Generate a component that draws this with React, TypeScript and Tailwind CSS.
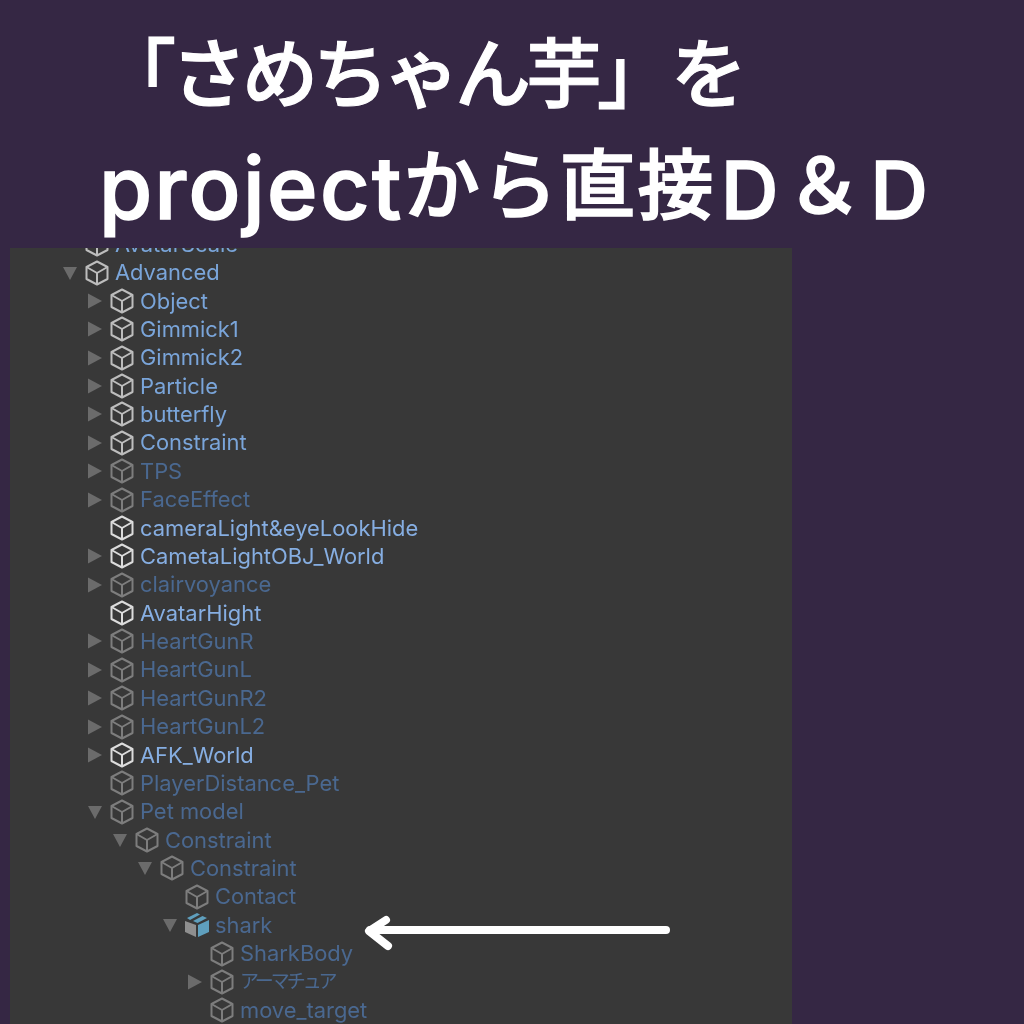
import React from "react";

type Tone = "blue" | "white" | "dim";
type Row = { n: string; d: number; a?: "r" | "d"; t: Tone; prefab?: boolean; cjk?: boolean };

const rows: Row[] = [
  { n: "AvatarScale", d: 0, t: "blue" },
  { n: "Advanced", d: 0, a: "d", t: "blue" },
  { n: "Object", d: 1, a: "r", t: "blue" },
  { n: "Gimmick1", d: 1, a: "r", t: "blue" },
  { n: "Gimmick2", d: 1, a: "r", t: "blue" },
  { n: "Particle", d: 1, a: "r", t: "blue" },
  { n: "butterfly", d: 1, a: "r", t: "blue" },
  { n: "Constraint", d: 1, a: "r", t: "blue" },
  { n: "TPS", d: 1, a: "r", t: "dim" },
  { n: "FaceEffect", d: 1, a: "r", t: "dim" },
  { n: "cameraLight&eyeLookHide", d: 1, t: "white" },
  { n: "CametaLightOBJ_World", d: 1, a: "r", t: "white" },
  { n: "clairvoyance", d: 1, a: "r", t: "dim" },
  { n: "AvatarHight", d: 1, t: "white" },
  { n: "HeartGunR", d: 1, a: "r", t: "dim" },
  { n: "HeartGunL", d: 1, a: "r", t: "dim" },
  { n: "HeartGunR2", d: 1, a: "r", t: "dim" },
  { n: "HeartGunL2", d: 1, a: "r", t: "dim" },
  { n: "AFK_World", d: 1, a: "r", t: "white" },
  { n: "PlayerDistance_Pet", d: 1, t: "dim" },
  { n: "Pet model", d: 1, a: "d", t: "dim" },
  { n: "Constraint", d: 2, a: "d", t: "dim" },
  { n: "Constraint", d: 3, a: "d", t: "dim" },
  { n: "Contact", d: 4, t: "dim" },
  { n: "shark", d: 4, a: "d", t: "dim", prefab: true },
  { n: "SharkBody", d: 5, t: "dim" },
  { n: "アーマチュア", d: 5, a: "r", t: "dim", cjk: true },
  { n: "move_target", d: 5, t: "dim" },
];

function Cube({ tone }: { tone: Tone }) {
  const c = tone === "white" ? "#dcdcdc" : tone === "dim" ? "#7d7d7d" : "#bdbdbd";
  return (
    <svg width="26" height="26" viewBox="0 0 26 26" fill="none" stroke={c} strokeWidth="2" strokeLinejoin="round">
      <path d="M13 1.5 L23.5 7 V19 L13 24.5 L2.5 19 V7 Z" />
      <path d="M2.5 7 L13 13 L23.5 7 M13 13 V24.5" />
    </svg>
  );
}

function Prefab() {
  return (
    <svg width="26" height="26" viewBox="0 0 26 26">
      <path d="M1 9 L12 13 V25 L1 20 Z" fill="#8f8f8f" />
      <path d="M14 13 L25 8 V20 L14 25 Z" fill="#5f9fbd" />
      <path d="M3 6 L13 1 L16 2.5 L6 8 Z" fill="#5f9fbd" />
      <path d="M9 9 L18.5 4 L23 6 L13.5 11 Z" fill="#5f9fbd" />
    </svg>
  );
}

function Arrow({ kind }: { kind: "r" | "d" }) {
  return (
    <svg width="16" height="16" viewBox="0 0 16 16" fill="#6b6b6b">
      {kind === "r" ? <path d="M1 0.5 L15 8 L1 15.5 Z" /> : <path d="M1 2 H15 L8 15 Z" />}
    </svg>
  );
}

const indent = ["ml-[62px]", "ml-[87px]", "ml-[112px]", "ml-[137px]", "ml-[162px]", "ml-[187px]"];
const tones: Record<Tone, string> = {
  blue: "text-[#7aa5da]",
  white: "text-[#86aee2]",
  dim: "text-[#4a6890]",
};

export default function App() {
  return (
    <div className="w-[1024px] h-[1024px] overflow-hidden bg-[#352744] flex flex-col">
      <div className="h-[248px] shrink-0 text-white font-['Noto_Sans_CJK_JP',sans-serif] font-medium">
        <div className="pl-[100px] pt-[19px] h-[110px] text-[76px] leading-[100px] tracking-[-5px] whitespace-nowrap [-webkit-text-stroke:1.2px_#ffffff]">
          「さめちゃん芋」<span className="ml-[3px]">を</span>
        </div>
        <div className="pl-[99px] pt-[26px] h-[138px] text-[76px] leading-[100px] whitespace-nowrap flex items-baseline [-webkit-text-stroke:1.6px_#ffffff]">
          <span className="font-['Inter',sans-serif] font-medium text-[86px] tracking-[2.4px]">project</span>
          <span className="tracking-[2px] -translate-y-[6px]">から直接</span>
          <span className="ml-[5px] font-['Inter',sans-serif] font-medium text-[80px]">D</span>
          <span className="ml-[8px] -translate-y-[6px]">＆</span>
          <span className="ml-[8px] font-['Inter',sans-serif] font-medium text-[80px]">D</span>
        </div>
      </div>
      <div className="relative ml-[10px] w-[782px] flex-1 overflow-hidden bg-[#383838]">
        <div className="-mt-[18px] -ml-[10px] font-['Inter','Noto_Sans_CJK_JP',sans-serif] text-[21.9px] blur-[0.5px]">
          {rows.map((r, i) => (
            <div key={i} className={`h-[28.38px] flex items-center whitespace-nowrap ${indent[r.d]}`}>
              <span className="w-[22px] flex items-center justify-start shrink-0">
                {r.a ? <Arrow kind={r.a} /> : null}
              </span>
              <span className="w-[31px] flex shrink-0">{r.prefab ? <Prefab /> : <Cube tone={r.t} />}</span>
              <span className={r.cjk ? `text-[19px] tracking-[-3px] ${tones[r.t]}` : tones[r.t]}>{r.n}</span>
            </div>
          ))}
        </div>
        <svg className="absolute left-[352px] top-[660px]" width="310" height="46" viewBox="0 0 310 46" fill="none" stroke="#ffffff" strokeWidth="8" strokeLinecap="round" strokeLinejoin="round">
          <path d="M304 22 H8" />
          <path d="M24 12 L7 23 L26 38" />
        </svg>
      </div>
    </div>
  );
}
